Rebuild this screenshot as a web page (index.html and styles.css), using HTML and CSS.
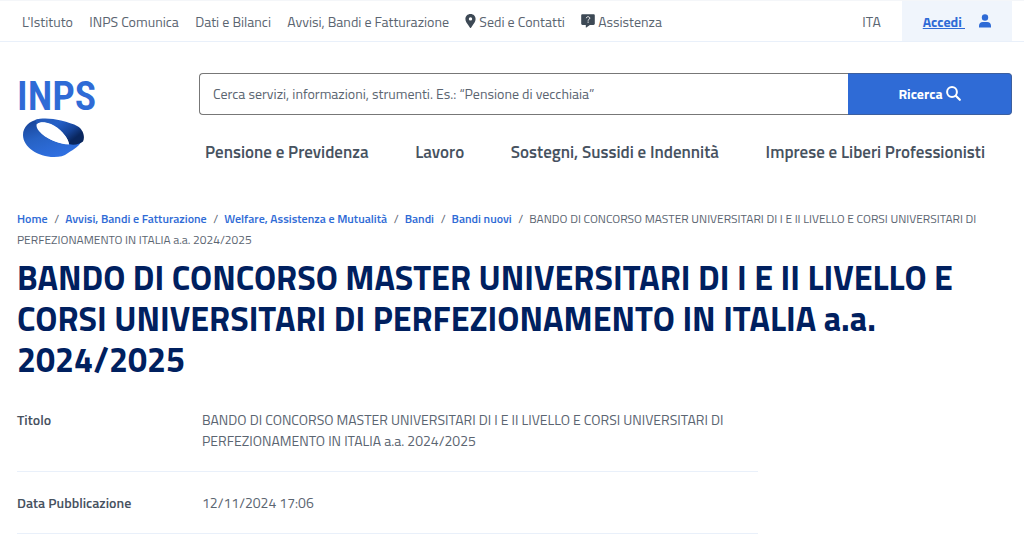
FILE: index.html
```html
<!DOCTYPE html>
<html lang="it">
<head>
<meta charset="utf-8">
<meta name="viewport" content="width=device-width, initial-scale=1">
<title>INPS - Bando di concorso</title>
<link rel="stylesheet" href="styles.css">
</head>
<body>
<div class="topbar">
  <nav class="topnav" aria-label="Istituzionale">
    <a href="#">L'Istituto</a>
    <a href="#">INPS Comunica</a>
    <a href="#">Dati e Bilanci</a>
    <a href="#">Avvisi, Bandi e Fatturazione</a>
    <a href="#" class="with-icon"><svg width="11" height="14" viewBox="0 0 11 14" aria-hidden="true"><path fill="#3d4955" fill-rule="evenodd" d="M5.500 0C2.400 0 .4 2.200.4 5c0 2.300 1.500 4.200 2.600 5.800L5 13.700c.3.400.7.400 1 0l2-2.900C9.100 9.200 10.600 7.300 10.600 5c0-2.800-2-5-5.100-5zm0 3.200a1.700 1.700 0 1 1 0 3.400 1.700 1.700 0 0 1 0-3.400z"/></svg>Sedi e Contatti</a>
    <a href="#" class="with-icon"><svg width="14" height="14" viewBox="0 0 14 14" aria-hidden="true"><path fill="#3d4955" d="M1.500.3h11c.8 0 1.300.5 1.300 1.300v8c0 .8-.5 1.300-1.300 1.300H8.900L5.300 13.600c-.2.200-.5 0-.5-.3v-2.400H1.500C.7 10.900.2 10.400.2 9.600v-8C.2.800.7.300 1.500.3z"/><path fill="none" stroke="#fff" stroke-width="1" d="M5.300 4.200c.1-2 3.500-1.900 3.500 0 0 1.200-1.700 1.100-1.700 2.400M7.100 7.500v1.300"/></svg>Assistenza</a>
  </nav>
  <div class="account">
    <a href="#" class="lang">ITA</a>
    <a href="#" class="login"><span>Accedi&nbsp;</span><svg width="12" height="14" viewBox="0 0 12 14" aria-hidden="true"><circle cx="6" cy="3.500" r="3.200" fill="#2f6bd6"/><path fill="#2f6bd6" d="M0 13.600v-1.800C0 9.500 1.600 8 3.800 8h4.400c2.200 0 3.800 1.500 3.800 3.800v1.800z"/></svg></a>
  </div>
</div>
<header class="header">
  <a href="#" class="logo" aria-label="INPS">
    <span class="logo-text">INPS</span>
    <svg width="62" height="40" viewBox="0 0 62 40" aria-hidden="true">
      <defs>
        <linearGradient id="band" x1="0" y1="0" x2="0.5" y2="1"><stop offset="0" stop-color="#163f90"/><stop offset="0.5" stop-color="#2762c4"/><stop offset="1" stop-color="#2f6fe0"/></linearGradient>
        <linearGradient id="fold" x1="0" y1="0" x2="1" y2="0.7"><stop offset="0" stop-color="#2558b4"/><stop offset="0.4" stop-color="#2560c8"/><stop offset="0.7" stop-color="#17459a"/><stop offset="0.9" stop-color="#09265e"/></linearGradient>
      </defs>
      <path fill="url(#band)" d="M16 1C6 3 0 9 0 17c0 12 15 22 31 22 6 0 10-1 14-4 6-4 12-7 14-13l-14 4C36 26 22 20 16 13 12 8 13 4 18 3z"/>
      <path fill="url(#fold)" d="M12 2C19-.5 29 .3 38 2.500c7 2 12 3 17 6 6 4 7 11 5 15-3 3-10 4-14 2.500C45 19 37 10 28 6 22 3.500 17 3.500 14 6z"/>
      <path fill="#fff" d="M14 7C15 3 24 4 31 8c8 5 14 12 15 18.500C36 26 26 22 19 16c-3-3-5-6-5-9z"/>
    </svg>
  </a>
  <div class="header-main">
    <form class="search">
      <input type="text" class="search-input" aria-label="Cerca" placeholder="Cerca servizi, informazioni, strumenti. Es.: “Pensione di vecchiaia”">
      <button type="button" class="search-button">Ricerca<svg width="15" height="15" viewBox="0 0 15 15" aria-hidden="true"><circle cx="6" cy="6" r="4.900" fill="none" stroke="#fff" stroke-width="2"/><path stroke="#fff" stroke-width="2.200" stroke-linecap="round" d="M9.800 9.800l4 4"/></svg></button>
    </form>
    <nav class="mainnav" aria-label="Principale">
      <a href="#">Pensione e Previdenza</a>
      <a href="#">Lavoro</a>
      <a href="#">Sostegni, Sussidi e Indennità</a>
      <a href="#">Imprese e Liberi Professionisti</a>
    </nav>
  </div>
</header>
<main class="content">
  <nav aria-label="Percorso">
    <ol class="breadcrumb">
      <li><a href="#">Home</a></li>
      <li><a href="#">Avvisi, Bandi e Fatturazione</a></li>
      <li><a href="#">Welfare, Assistenza e Mutualità</a></li>
      <li><a href="#">Bandi</a></li>
      <li><a href="#">Bandi nuovi</a></li>
      <li>BANDO DI CONCORSO MASTER UNIVERSITARI DI I E II LIVELLO E CORSI UNIVERSITARI DI PERFEZIONAMENTO IN ITALIA a.a. 2024/2025</li>
    </ol>
  </nav>
  <h1 class="title">BANDO DI CONCORSO MASTER UNIVERSITARI DI I E II LIVELLO E CORSI UNIVERSITARI DI PERFEZIONAMENTO IN ITALIA a.a. 2024/2025</h1>
  <dl class="details">
    <div class="row">
      <dt>Titolo</dt>
      <dd>BANDO DI CONCORSO MASTER UNIVERSITARI DI I E II LIVELLO E CORSI UNIVERSITARI DI PERFEZIONAMENTO IN ITALIA a.a. 2024/2025</dd>
    </div>
    <div class="row">
      <dt>Data Pubblicazione</dt>
      <dd>12/11/2024 17:06</dd>
    </div>
  </dl>
</main>
</body>
</html>
```
FILE: styles.css
```css
* { box-sizing: border-box; }
body {
  margin: 0;
  background: #fff;
  color: #5b6571;
  font-family: "Titillium Web", Roboto, "Liberation Sans", sans-serif;
  font-size: 14px;
}
a { color: inherit; text-decoration: none; }
svg { flex: none; }
.topbar {
  display: flex;
  justify-content: space-between;
  height: 42px;
  padding: 0 12px 0 22px;
  border-top: 1px solid #f4f6f9;
  border-bottom: 1px solid #e9f0fa;
}
.topnav {
  display: flex;
  flex: 0 1 640px;
  justify-content: space-between;
  align-items: center;
  white-space: nowrap;
}
.with-icon { display: flex; align-items: center; gap: 3px; }
.account { display: flex; align-items: center; }
.lang { padding-right: 21px; }
.login {
  display: flex;
  align-items: center;
  align-self: stretch;
  gap: 14px;
  padding: 0 21px;
  background: #f0f5fc;
  color: #2f6bd6;
  font-weight: 700;
}
.login span { text-decoration: underline; }
.header {
  display: flex;
  padding: 28px 12px 0 17px;
}
.logo { display: flex; flex-direction: column; flex: 0 0 182px; }
.logo-text {
  height: 48px;
  color: #2f6bd6;
  font-family: "Roboto Condensed", "Liberation Sans Narrow", Roboto, sans-serif;
  font-size: 40px;
  font-weight: 600;
  line-height: 54px;
}
.logo svg { margin-left: 6px; }
.header-main { flex: 1; padding-top: 3px; }
.search { display: flex; height: 42px; }
.search-input {
  flex: 1;
  min-width: 0;
  padding: 0 13px 2px;
  border: 1px solid #777;
  border-right: 0;
  border-radius: 4px 0 0 4px;
  font: inherit;
}
.search-input::placeholder { color: #5b6571; opacity: 1; }
.search-button {
  display: flex;
  flex: 0 0 164px;
  align-items: center;
  justify-content: center;
  gap: 3px;
  padding: 0 0 2px;
  border: 1px solid #3c5f9f;
  border-left: 0;
  border-radius: 0 4px 4px 0;
  background: #2f6bd6;
  color: #fff;
  font: inherit;
  font-weight: 700;
}
.mainnav {
  display: flex;
  justify-content: space-between;
  padding: 25px 27px 0 6px;
  color: #47525f;
  font-size: 17px;
  font-weight: 600;
  line-height: 24px;
  white-space: nowrap;
}
.content { padding: 44px 40px 0 17px; }
.breadcrumb {
  margin: 0;
  padding: 0;
  list-style: none;
  font-size: 12px;
  line-height: 21px;
}
.breadcrumb li { display: inline; }
.breadcrumb li + li::before { content: "/"; margin: 0 6px 0 4px; }
.breadcrumb a { color: #2f6bd6; font-weight: 600; }
.title {
  margin: 7px 0 0;
  color: #00205f;
  font-size: 34px;
  font-weight: 700;
  line-height: 41px;
}
.details { max-width: 741px; margin: 9px 0 0; }
.row {
  display: grid;
  grid-template-columns: 185px 1fr;
  padding: 20px 0;
  border-bottom: 1px solid #e9f0fa;
  line-height: 21px;
}
.row dt { color: #47525f; font-weight: 600; }
.row dd { margin: 0; }
```
